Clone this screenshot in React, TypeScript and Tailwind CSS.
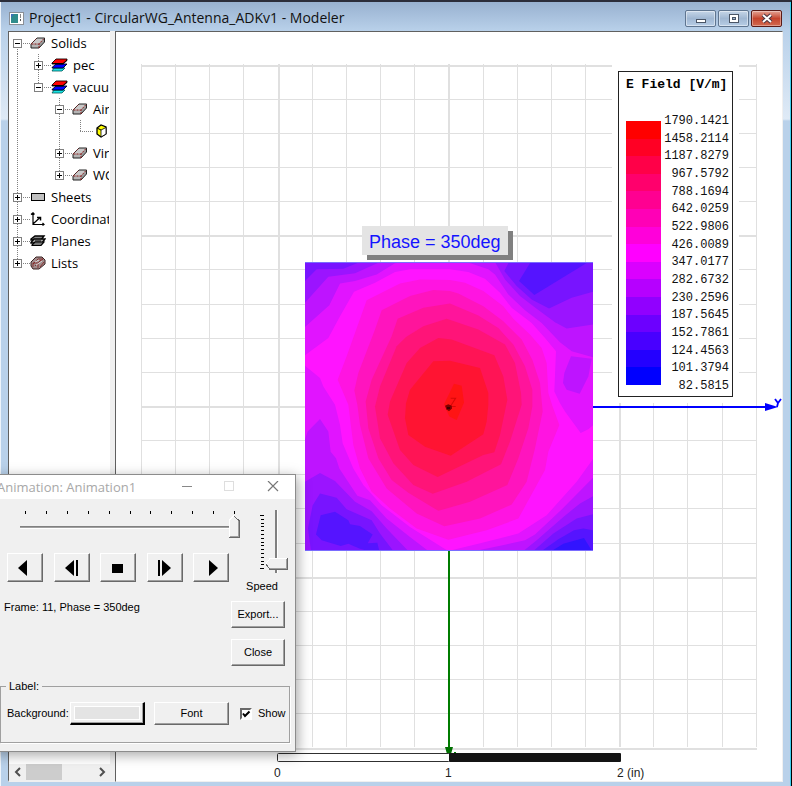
import type { ReactNode } from "react";

const UI = "font-['Open_Sans','Noto_Sans',sans-serif]";
const CLASSIC = "font-['Liberation_Sans',Arial,sans-serif]";

/* ---------- tree icons ---------- */

function SolidIcon() {
  return (
    <svg width="16" height="14" viewBox="0 0 16 14" className="shrink-0">
      <path d="M1 8 7 2H14.5L9 8Z" fill="#c8c8c8" />
      <path d="M1 8H9V12H1Z" fill="#b4b4b4" />
      <path d="M9 8 14.5 2V6L9 12Z" fill="#9a9a9a" />
      <path d="M1 8 7 2H14.5V6L9 12H1Z" fill="none" stroke="#222" />
      <path d="M9 12V8L14.5 2M1.5 8H9" fill="none" stroke="#8a1c1c" strokeDasharray="2 1" />
      <path d="M1 8 7 2" stroke="#8a3030" strokeDasharray="1 1" />
    </svg>
  );
}

function MaterialIcon() {
  return (
    <svg width="17" height="14" viewBox="0 0 17 14" className="shrink-0">
      <path d="M1 13 3 10H14L11 13Z" fill="#19e6e6" stroke="#055" strokeWidth=".8" />
      <path d="M1 9.5 5 6H16L12 10H1Z" fill="#00f" stroke="#001" strokeWidth=".9" />
      <path d="M1 5 5 1H16V2.500L12 6H1Z" fill="#f00" stroke="#100" strokeWidth=".9" />
      <path d="M1 5.500H12L16 2" fill="none" stroke="#000" />
    </svg>
  );
}

function BoxIcon() {
  return (
    <svg width="15" height="14" viewBox="-3 0 15 14" className="shrink-0">
      <path d="M1 4 5 1 10 3V10L5 13 1 10Z" fill="#ff0" stroke="#000" strokeWidth="1.300" />
      <path d="M5 6 10 3.500V10L5 13Z" fill="#fff" stroke="#000" strokeWidth=".8" />
      <path d="M1 4 5 6" stroke="#000" />
    </svg>
  );
}

function SheetIcon() {
  return (
    <svg width="16" height="14" viewBox="0 0 16 14" className="shrink-0">
      <rect x="1.500" y="3.500" width="13" height="7" fill="#c0c0c0" stroke="#000" />
    </svg>
  );
}

function AxesIcon() {
  return (
    <svg width="16" height="14" viewBox="0 0 16 14" className="shrink-0" fill="none" stroke="#000">
      <path d="M3 1V12.500H14M3 12 10 5.500M1 2.500 3 .8 4.500 2.500M12.500 11 14 12.500 12.500 13.500" strokeWidth="1.200" />
      <path d="M7 5.500H10.500V8.500" strokeWidth="1.500" />
    </svg>
  );
}

function PlanesIcon() {
  return (
    <svg width="16" height="14" viewBox="0 0 16 14" className="shrink-0">
      <path d="M1 5 5 2H14L11 6H1Z" fill="#888" stroke="#000" strokeWidth="1.400" />
      <path d="M1 8.500 4 5H15L12 9H1Z" fill="#aaa" stroke="#000" strokeWidth="1.400" />
      <path d="M2 11 5 8H14L11 11.500H2Z" fill="#777" stroke="#000" strokeWidth="1.200" />
      <path d="M5 7H11" stroke="#000" />
    </svg>
  );
}

function ListsIcon() {
  return (
    <svg width="16" height="14" viewBox="0 0 16 14" className="shrink-0">
      <path d="M1 6 6 1H12L15 4V8L9 13H3L1 10Z" fill="#a08c8c" stroke="#3a2020" />
      <path d="M3 8 8 3H13M3 11V7H8L13 3M8 12V7M5 10 11 4M10 11 14 6" fill="none" stroke="#842828" strokeWidth=".9" />
      <path d="M5 6 9 4M6 9 12 5" stroke="#ddd" />
    </svg>
  );
}

/* ---------- tree ---------- */

type Half = "full" | "top" | "bottom";
type Node = {
  label: string;
  depth: number;
  toggle?: "+" | "-";
  icon: ReactNode;
  lines: [number, Half][];
};

const nodes: Node[] = [
  { label: "Solids", depth: 0, toggle: "-", icon: <SolidIcon />, lines: [[0, "bottom"]] },
  { label: "pec", depth: 1, toggle: "+", icon: <MaterialIcon />, lines: [[0, "full"], [1, "full"]] },
  { label: "vacuu", depth: 1, toggle: "-", icon: <MaterialIcon />, lines: [[0, "full"], [1, "top"]] },
  { label: "Air", depth: 2, toggle: "-", icon: <SolidIcon />, lines: [[0, "full"], [2, "full"]] },
  { label: "", depth: 3, icon: <BoxIcon />, lines: [[0, "full"], [2, "full"], [3, "top"]] },
  { label: "Vir", depth: 2, toggle: "+", icon: <SolidIcon />, lines: [[0, "full"], [2, "full"]] },
  { label: "WG", depth: 2, toggle: "+", icon: <SolidIcon />, lines: [[0, "full"], [2, "top"]] },
  { label: "Sheets", depth: 0, toggle: "+", icon: <SheetIcon />, lines: [[0, "full"]] },
  { label: "Coordinat", depth: 0, toggle: "+", icon: <AxesIcon />, lines: [[0, "full"]] },
  { label: "Planes", depth: 0, toggle: "+", icon: <PlanesIcon />, lines: [[0, "full"]] },
  { label: "Lists", depth: 0, toggle: "+", icon: <ListsIcon />, lines: [[0, "top"]] },
];

function TreeRow({ node }: { node: Node }) {
  const w = 21 * node.depth + 21;
  const cx = 21 * node.depth + 8;
  return (
    <li className="flex h-[22px] items-center whitespace-nowrap">
      <svg width={w} height="22" className="shrink-0" shapeRendering="crispEdges">
        {node.lines.map(([level, half]) => (
          <line
            key={level}
            x1={21 * level + 8.5}
            x2={21 * level + 8.5}
            y1={half === "bottom" ? 11 : 0}
            y2={half === "top" ? 11 : 22}
            stroke="#808080"
            strokeDasharray="1 1"
          />
        ))}
        <line x1={cx} x2={w} y1="11.5" y2="11.5" stroke="#808080" strokeDasharray="1 1" />
        {node.toggle && (
          <>
            <rect x={cx - 3.5} y="7.5" width="8" height="8" fill="#fff" stroke="#808080" />
            <path d={`M${cx - 2} 11.5h5`} stroke="#000" />
            {node.toggle === "+" && <path d={`M${cx + 0.5} 9v5`} stroke="#000" />}
          </>
        )}
      </svg>
      {node.icon}
      <span className="pl-[5px] text-[13px] leading-[22px] text-black">{node.label}</span>
    </li>
  );
}

function Tree() {
  return (
    <aside className="flex w-[102px] shrink-0 flex-col border-b-2 border-l border-t border-b-[#f0f0f0] border-l-[#606060] border-t-[#606060] bg-white">
      <ul className="w-[100px] flex-1 overflow-hidden">
        {nodes.map((n, i) => (
          <TreeRow key={i} node={n} />
        ))}
      </ul>
      <div className="flex h-4 items-center bg-[#f0f0f0] text-[#505050]">
        <button aria-label="Scroll left" className="flex w-[17px] justify-center">
          <svg width="8" height="10" fill="none" stroke="currentColor" strokeWidth="2">
            <path d="M6 1 2 5 6 9" />
          </svg>
        </button>
        <div className="h-4 w-9 bg-[#cdcdcd]" />
        <div className="flex-1" />
        <button aria-label="Scroll right" className="flex w-[17px] justify-center">
          <svg width="8" height="10" fill="none" stroke="currentColor" strokeWidth="2">
            <path d="M2 1 6 5 2 9" />
          </svg>
        </button>
      </div>
    </aside>
  );
}

/* ---------- field plot ---------- */

const regions: [string, string][] = [
  ["#e114ff", "0,279 70,227 105,162 147,89 210,62 270,30 315,22 435,22 490,30 540,50 585,92 620,137 680,182 720,227 753,267 748,387 765,422 780,447 827,511 850,500 864,488 864,0 0,0"],
  ["#be14ff", "0,194 73,129 105,64 150,57 215,37 270,4 300,0 0,0"],
  ["#9b14ff", "0,122 70,44 150,34 225,0 0,0"],
  ["#7814ff", "0,57 35,22 115,20 165,0 0,0"],
  ["#5514ff", "5,0 20,3 90,3 130,0"],
  ["#be14ff", "485,0 550,22 570,37 610,97 660,144 710,182 765,240 800,267 864,285 864,0"],
  ["#9b14ff", "570,0 600,52 645,102 695,140 750,180 785,199 864,187 864,0"],
  ["#7814ff", "612,0 598,27 635,72 680,112 732,139 800,107 864,89 864,0"],
  ["#5514ff", "677,0 642,57 688,99 850,0"],
  ["#be14ff", "798,282 860,289 850,342 824,394 785,382 774,362 778,332"],
  ["#e114ff", "0,310 45,347 55,372 90,427 105,487 113,542 145,617 175,667 230,727 315,792 410,852 430,864 0,864"],
  ["#be14ff", "0,530 8,507 45,469 70,507 77,567 93,587 103,617 157,699 195,712 245,767 315,822 370,864 0,864"],
  ["#9b14ff", "0,657 45,631 90,655 150,717 200,745 245,797 310,864 0,864"],
  ["#7814ff", "23,727 45,692 95,705 125,739 200,772 225,812 265,864 18,864 9,797"],
  ["#5514ff", "47,757 90,747 130,772 135,784 165,789 203,815 188,841 217,839 223,864 190,864 165,857 130,842 107,849 50,832 33,815"],
  ["#e114ff", "430,864 520,842 640,812 725,757 815,657 864,589 864,864"],
  ["#be14ff", "510,864 600,845 660,832 690,815 770,740 864,645 864,864"],
  ["#9b14ff", "655,864 695,832 775,762 825,722 864,700 864,864"],
  ["#7814ff", "685,864 745,812 815,767 864,754 864,864"],
  ["#5514ff", "710,864 760,829 807,802 835,797 864,802 864,864"],
  ["#3214ff", "740,864 775,842 837,825 861,864"],
  ["#ff14e1", "98,352 125,282 185,114 285,64 345,52 435,54 480,62 535,87 595,132 625,170 675,217 710,257 725,302 730,392 742,430 763,487 730,567 720,622 640,767 545,802 430,830 335,797 255,737 200,687 165,617 145,547 130,427"],
  ["#ff14be", "148,384 160,332 210,202 230,144 315,102 385,84 435,87 460,94 535,132 595,177 650,232 682,292 705,362 713,447 690,557 665,657 620,725 525,767 418,790 335,752 245,677 190,587 165,487 157,427"],
  ["#ff149b", "182,417 200,352 260,222 278,170 355,137 435,124 520,160 580,197 625,247 660,312 682,382 682,432 670,497 640,587 607,667 495,717 400,744 310,690 260,652 220,587 190,497"],
  ["#ff1478", "210,432 225,372 275,252 303,224 355,192 425,170 520,202 600,247 630,302 648,392 650,427 615,537 588,605 485,657 383,693 325,667 265,602 225,527"],
  ["#ff1455", "248,457 255,417 305,302 345,257 400,227 440,232 568,279 595,342 607,412 585,517 568,569 535,577 398,643 325,607 285,562"],
  ["#ff1432", "300,467 303,422 315,382 385,297 435,295 525,317 550,392 550,427 545,477 535,515 437,579 360,552 310,517"],
  ["#ff1414", "447,364 470,370 477,420 455,472 433,462 417,425"],
];

const STEP = 34.15;

function Scene() {
  const cols = Array.from({ length: 19 }, (_, i) => i);
  const rows = Array.from({ length: 21 }, (_, i) => i);
  return (
    <svg className="block size-full" role="img" aria-label="E field plot">
      <g stroke="#e0e0e0" shapeRendering="crispEdges">
        {cols.map((i) => {
          const x = Math.round(25 + i * STEP) + 0.5;
          return <line key={i} x1={x} x2={x} y1="32" y2="715" strokeWidth={i % 5 === 4 ? 2 : 1} />;
        })}
        {rows.map((i) => {
          const y = Math.round(32.5 + i * STEP) + 0.5;
          return <line key={i} x1="25" x2="641" y1={y} y2={y} strokeWidth={i % 5 === 0 ? 2 : 1} />;
        })}
      </g>
      {/* Y axis */}
      <path d="M477 375H652" stroke="#00f" strokeWidth="2" />
      <path d="M649 371 662 375 649 379Z" fill="#00f" />
      <path d="M659 367 662 371 665 367M662 371 661 375" fill="none" stroke="#00f" strokeWidth="1.800" />
      {/* X axis */}
      <path d="M333 518V720" stroke="#007c00" strokeWidth="2" />
      <path d="M329 715H337L335 722H331Z" fill="#007000" />
      <path d="M338 721h2" stroke="#007c00" strokeWidth="2" />
      <svg x="189" y="230" width="288" height="289" viewBox="0 0 864 864" preserveAspectRatio="none">
        <rect width="864" height="864" fill="#ff14ff" />
        {regions.map(([fill, points], i) => (
          <polygon key={i} fill={fill} points={points} />
        ))}
        <path d="M437 407H452L436 432H452" fill="none" stroke="#d80808" strokeWidth="3" />
        <path d="M420 430 430 425 440 430 441 438 432 446 424 440Z" fill="#800000" />
        <path d="M426 434h9v5h-9Z" fill="#300000" />
        <path d="M0 1.500H864M0 862.500H864" stroke="#7a6cff" strokeWidth="3" />
      </svg>
      {/* scale ruler */}
      <rect x="161.500" y="721.500" width="172" height="8" rx="1" fill="#fff" stroke="#303030" />
      <rect x="333" y="721" width="172" height="9" rx="1" fill="#141414" />
      <g className={CLASSIC} fontSize="12" fill="#222">
        <text x="158" y="745">0</text>
        <text x="329" y="745">1</text>
        <text x="501" y="745">2 (in)</text>
      </g>
    </svg>
  );
}

const levels = [
  "1790.1421", "1458.2114", "1187.8279", "967.5792", "788.1694", "642.0259", "522.9806", "426.0089",
  "347.0177", "282.6732", "230.2596", "187.5645", "152.7861", "124.4563", "101.3794", "82.5815",
];

const ramp = [
  "bg-[#ff0000]", "bg-[#ff0024]", "bg-[#ff0048]", "bg-[#ff006c]", "bg-[#ff0091]",
  "bg-[#ff00b6]", "bg-[#ff00da]", "bg-[#ff00ff]", "bg-[#da00ff]", "bg-[#b600ff]",
  "bg-[#9100ff]", "bg-[#6c00ff]", "bg-[#4800ff]", "bg-[#2400ff]", "bg-[#0000ff]",
];

function Legend() {
  return (
    <div className="absolute left-[496px] top-[30px] bg-white px-1.5 pb-1.5 pt-[9px] font-['Liberation_Mono',monospace]">
      <div className="h-[326px] w-[115px] border border-[#222] bg-white pl-[7px] pr-[3px] pt-1">
        <h2 className="whitespace-nowrap text-[13px] font-bold leading-[18px] text-black">E Field [V/m]</h2>
        <div className="mt-[19px] flex justify-between">
          <div className="my-2 flex h-[264px] w-[35px] flex-col">
            {ramp.map((c) => (
              <div key={c} className={`flex-1 ${c}`} />
            ))}
          </div>
          <ul className="flex h-[282px] flex-col justify-between text-right text-[12px] leading-[17px] text-[#111]">
            {levels.map((v) => (
              <li key={v}>{v}</li>
            ))}
          </ul>
        </div>
      </div>
    </div>
  );
}

/* ---------- animation dialog ---------- */

const RAISED =
  "border border-b-[#696969] border-l-white border-r-[#696969] border-t-white bg-[#f0f0f0] shadow-[inset_-1px_-1px_0_#a0a0a0]";

const transport: [string, string][] = [
  ["Play backward", "M12 6V22L3 14Z"],
  ["Step backward", "M12 6V22L3 14ZM14 6H16V22H14Z"],
  ["Stop", "M4 10H15V19H4Z"],
  ["Step forward", "M7 6V22L16 14ZM3 6H5V22H3Z"],
  ["Play forward", "M8 6V22L17 14Z"],
];

function FrameSlider() {
  return (
    <div className="relative h-[54px] w-[240px]">
      <svg width="240" height="54" className="block" shapeRendering="crispEdges">
        {Array.from({ length: 11 }, (_, i) => {
          const x = Math.round(21 + i * 20.9) + 0.5;
          return <line key={i} x1={x} x2={x} y1="12" y2="15" stroke="#000" />;
        })}
        <path d="M16 27.500H227" stroke="#808080" />
        <path d="M16 28.500H227" stroke="#a0a0a0" />
        <path d="M16 29.500H227" stroke="#fff" />
        <path d="M225 38V21L230 16 235 21V38Z" fill="#f0f0f0" />
        <path d="M225.500 38V21L230 16.500" fill="none" stroke="#fff" />
        <path d="M230 17 235.500 22V38.500H225" fill="none" stroke="#696969" />
        <path d="M234.500 22V37.500H226" fill="none" stroke="#a0a0a0" />
      </svg>
      <input
        type="range"
        aria-label="Frame"
        min={1}
        max={11}
        defaultValue={11}
        className="absolute inset-0 m-0 size-full opacity-0"
      />
    </div>
  );
}

function SpeedSlider() {
  return (
    <div className="relative h-20 w-[58px]">
      <svg width="58" height="80" className="block" shapeRendering="crispEdges">
        {Array.from({ length: 15 }, (_, i) => (
          <line key={i} x1={i % 14 === 0 ? 29 : 30} x2="33" y1={16.5 + i * 3.8} y2={16.5 + i * 3.8} stroke="#000" />
        ))}
        <path d="M45 11V74" stroke="#808080" strokeWidth="2" />
        <path d="M46.500 11V74" stroke="#fff" />
        <path d="M35 64.500 39 59.500H56V70H39Z" fill="#f0f0f0" />
        <path d="M35 64.500 39 59.500H56" fill="none" stroke="#fff" />
        <path d="M35 65 39 70.500H56.500V59" fill="none" stroke="#696969" />
        <path d="M39 69.500H55.500V60" fill="none" stroke="#a0a0a0" />
      </svg>
      <input
        id="speed"
        type="range"
        min={0}
        max={14}
        defaultValue={1}
        className="absolute inset-0 m-0 size-full opacity-0"
      />
    </div>
  );
}

function AnimationDialog() {
  return (
    <div
      role="dialog"
      aria-labelledby="anim-title"
      className="absolute -left-2 top-[472px] w-[304px] border border-[#8c8c8c] bg-[#f0f0f0] shadow-[2px_3px_12px_rgba(0,0,0,0.35)]"
    >
      <div className="flex h-6 items-center bg-white">
        <h2 id="anim-title" className={`flex-1 whitespace-nowrap pl-1 text-[13px] leading-6 text-[#a8a8a8] ${UI}`}>
          Animation: Animation1
        </h2>
        <div className="flex items-center gap-[31px] pr-4 text-[#888]">
          <button aria-label="Minimize">
            <svg width="12" height="12" className="block" stroke="currentColor">
              <path d="M1 5.500H11" />
            </svg>
          </button>
          <button aria-label="Maximize" disabled>
            <svg width="12" height="12" className="block" fill="none" stroke="#dedede">
              <rect x=".5" y=".5" width="9" height="9" />
            </svg>
          </button>
          <button aria-label="Close window">
            <svg width="12" height="12" className="block" stroke="#777" strokeWidth="1.200">
              <path d="M1 0 11 10M11 0 1 10" />
            </svg>
          </button>
        </div>
      </div>

      <div className={`pb-2 text-[11px] text-black ${CLASSIC}`}>
        <div className="flex pl-[11px]">
          <div className="w-[227px]">
            <FrameSlider />
            <div className="ml-[3px] flex w-[222px] justify-between">
              {transport.map(([name, d]) => (
                <button key={name} aria-label={name} className={`flex h-[29px] w-9 items-center justify-center ${RAISED}`}>
                  <svg width="20" height="28" className="block">
                    <path d={d} />
                  </svg>
                </button>
              ))}
            </div>
            <p className="mt-[17px] leading-4">Frame: 11, Phase = 350deg</p>
          </div>
          <div className="w-[54px]">
            <SpeedSlider />
            <label htmlFor="speed" className="block pl-2 text-center leading-[14px]">
              Speed
            </label>
            <button className={`mt-2 block h-[27px] w-[54px] ${RAISED}`}>Export...</button>
            <button className={`mt-[11px] block h-[27px] w-[54px] ${RAISED}`}>Close</button>
          </div>
        </div>

        <fieldset className="ml-[7px] mt-[13px] h-16 w-[290px] border border-[#a0a0a0] shadow-[1px_1px_0_#fff]">
          <legend className="ml-[5px] px-[3px] leading-[14px]">Label:</legend>
          <div className="flex items-center pl-1.5 pt-[9px]">
            <label htmlFor="background" className="w-[63px] whitespace-nowrap">
              Background:
            </label>
            <button
              id="background"
              className="h-[23px] w-[75px] border border-b-2 border-b-black border-l-white border-r-2 border-r-black border-t-white p-[3px] shadow-[inset_-1px_-1px_0_#a0a0a0]"
            >
              <span className="block size-full border border-white bg-[#e4e4e4]" />
            </button>
            <button className={`ml-[9px] h-[23px] w-[75px] ${RAISED}`}>Font</button>
            <label className="ml-[11px] flex items-center gap-1.5">
              <span className="relative block size-3">
                <input
                  type="checkbox"
                  defaultChecked
                  className="peer block size-3 appearance-none border-2 border-b-white border-l-[#696969] border-r-white border-t-[#696969] bg-white"
                />
                <svg viewBox="0 0 12 12" className="pointer-events-none absolute inset-0 hidden size-3 peer-checked:block">
                  <path d="M3 5.500 5 8 9.500 3.500" fill="none" stroke="#000" strokeWidth="2" />
                </svg>
              </span>
              Show
            </label>
          </div>
        </fieldset>
      </div>
    </div>
  );
}

/* ---------- window ---------- */

const CAPTION =
  "flex h-[17px] w-[31px] items-center justify-center rounded-[2px] border border-[#5f7590] bg-gradient-to-b from-[#c6d6e8] via-[#a0b7d2] to-[#b7cde6] shadow-[inset_0_0_0_1px_rgba(255,255,255,0.45)]";

export default function App() {
  return (
    <div
      className={`relative flex h-screen flex-col overflow-hidden border-r border-t-2 border-r-black border-t-[#2b2d3a] bg-[#b9d1ea] ${UI}`}
    >
      <div className="flex min-h-0 flex-1 flex-col border-l border-r border-l-[#eef4fb] border-r-[#3fd0ee]">
        <header className="flex h-[29px] shrink-0 items-center bg-gradient-to-b from-[#98b1d0] to-[#b9d1ea] pl-2 pr-2 pt-[3px]">
          <svg width="15" height="13" className="mr-[5px] shrink-0">
            <rect x=".5" y=".5" width="14" height="12" fill="#fff" stroke="#8a8f96" />
            <rect x="2" y="2" width="7" height="9" fill="#2f8c8c" />
            <path d="M2 6 5 2H2Z" fill="#3d6fb8" />
            <path d="M11.500 2V6" stroke="#888" />
            <path d="M11.500 7V9" stroke="#555" />
          </svg>
          <h1 className="flex-1 whitespace-nowrap text-[14px] leading-5 text-[#111]">
            Project1 - CircularWG_Antenna_ADKv1 - Modeler
          </h1>
          <div className="flex gap-0.5">
            <button aria-label="Minimize window" className={CAPTION}>
              <svg width="12" height="11">
                <rect x="1.500" y="6.500" width="9" height="3" fill="#fff" stroke="#4a5566" />
              </svg>
            </button>
            <button aria-label="Restore window" className={CAPTION}>
              <svg width="12" height="11" fill="#fff" stroke="#4a5566">
                <rect x="1.500" y="1.500" width="9" height="8" />
                <rect x="4.500" y="4.500" width="3" height="2" fill="#9fb4ce" />
              </svg>
            </button>
            <button
              aria-label="Close modeler"
              className="flex h-[17px] w-[31px] items-center justify-center rounded-[2px] border border-[#5a1a16] bg-gradient-to-b from-[#e3a294] via-[#c4432c] to-[#d2694f] shadow-[inset_0_0_0_1px_rgba(255,255,255,0.35)]"
            >
              <svg width="12" height="11" fill="none">
                <path d="M2 2 10 9M10 2 2 9" stroke="#4a3540" strokeWidth="4" />
                <path d="M2 2 10 9M10 2 2 9" stroke="#fff" strokeWidth="2" />
              </svg>
            </button>
          </div>
        </header>

        <main className="flex min-h-0 flex-1 bg-[linear-gradient(to_bottom,#b9d1ea,#dfeaf6_88px,#b9d1ea_90px)] px-[7px] pb-1">
          <Tree />
          <div className="w-[5px] shrink-0 bg-[#f0f0f0]" />
          <section className="relative min-w-0 flex-1 overflow-hidden border border-b-[#f0f0f0] border-l-[#606060] border-r-[#f0f0f0] border-t-[#606060] bg-white">
            <Scene />
            <div
              className={`absolute left-[246px] top-[194px] bg-[#e4e4e4] px-[7px] pb-0.5 pt-1.5 text-[18px] leading-[21px] text-[#1414ff] shadow-[5px_5px_0_#808080] ${CLASSIC}`}
            >
              Phase = 350deg
            </div>
            <Legend />
          </section>
        </main>
      </div>
      <AnimationDialog />
    </div>
  );
}
